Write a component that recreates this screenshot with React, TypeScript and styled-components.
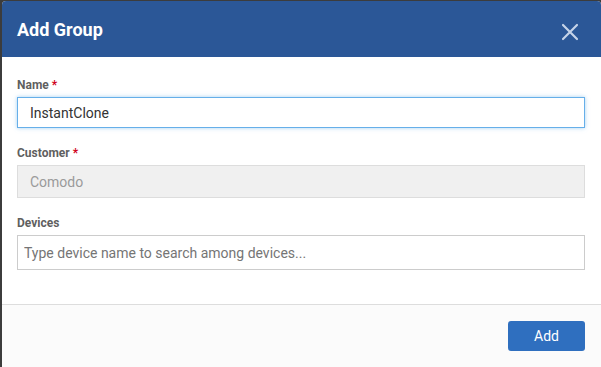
import React, {useState} from 'react';
import styled, {createGlobalStyle} from 'styled-components';

const GlobalStyle = createGlobalStyle`
  html, body {
    margin: 0;
    padding: 0;
    background: #3c3c3c;
    font-family: Roboto, "Liberation Sans", Arial, sans-serif;
  }
`;

// whole dialog
const Modal = styled.div`
  margin: 1px 0 0 2px;
  height: 366px;
  background: #ffffff;
  border-radius: 4px 4px 0 0;
  overflow: hidden;
  display: flex;
  flex-direction: column;
`;

const Header = styled.div`
  height: 56px;
  background: #2b5797;
  display: flex;
  align-items: center;
  justify-content: space-between;
  padding: 0 22px 0 15px;
  flex-shrink: 0;
`;

const Title = styled.h4`
  margin: 0;
  color: #ffffff;
  font-size: 18px;
  font-weight: 700;
`;

const CloseButton = styled.button`
  background: none;
  border: none;
  padding: 0;
  margin-top: 5px;
  display: flex;
  cursor: pointer;
`;

const Body = styled.div`
  flex: 1;
  padding: 21px 16px 0 15px;
  display: flex;
  flex-direction: column;
`;

const Field = styled.div`
  display: flex;
  flex-direction: column;
  margin-bottom: 18px;
`;

const Label = styled.label`
  font-size: 12px;
  font-weight: 700;
  color: #5f5f5f;
  margin-bottom: 5px;
  line-height: 14px;
`;

const Req = styled.span`
  color: #d0021b;
  margin-left: 3px;
`;

const Input = styled.input<{$focus?: boolean; $pad?: number; $h?: number}>`
  box-sizing: border-box;
  width: 100%;
  height: ${p => p.$h ?? 31}px;
  padding: 0 ${p => p.$pad ?? 12}px;
  font-family: inherit;
  font-size: 14px;
  color: #333333;
  background: #ffffff;
  border: 1px solid ${p => (p.$focus ? '#66afe9' : '#cccccc')};
  border-radius: 0;
  outline: none;
  box-shadow: ${p => (p.$focus ? '0 0 4px rgba(102, 175, 233, 0.6)' : 'none')};

  &:disabled {
    background: #f0f0f0;
    color: #9a9a9a;
    border-color: #dddddd;
  }

  &::placeholder {
    color: #757575;
  }
`;

const Footer = styled.div`
  height: 63px;
  border-top: 1px solid #dddddd;
  background: #fbfbfb;
  display: flex;
  align-items: flex-start;
  justify-content: flex-end;
  padding: 16px 16px 0 0;
  box-sizing: border-box;
  flex-shrink: 0;
`;

const AddButton = styled.button`
  width: 77px;
  height: 30px;
  background: #2f6fbf;
  color: #ffffff;
  border: none;
  border-radius: 3px;
  font-family: inherit;
  font-size: 14px;
  cursor: pointer;
`;

function App() {
    const [name, setName] = useState('InstantClone');
    const [devices, setDevices] = useState('');

    return (
        <>
            <GlobalStyle/>
            <Modal>
                <Header>
                    <Title>Add Group</Title>
                    <CloseButton aria-label="Close">
                        <svg width="18" height="18" viewBox="0 0 18 18">
                            <path d="M2 2 L16 16 M16 2 L2 16" stroke="#c5d3e8" strokeWidth="2.2" strokeLinecap="round"/>
                        </svg>
                    </CloseButton>
                </Header>
                <Body>
                    <Field>
                        <Label>Name<Req>*</Req></Label>
                        <Input $focus value={name} onChange={(e) => setName(e.target.value)}/>
                    </Field>
                    <Field>
                        <Label>Customer<Req>*</Req></Label>
                        <Input $h={33} value="Comodo" disabled readOnly/>
                    </Field>
                    <Field>
                        <Label>Devices</Label>
                        <Input
                            $pad={6}
                            $h={35}
                            value={devices}
                            placeholder="Type device name to search among devices..."
                            onChange={(e) => setDevices(e.target.value)}
                        />
                    </Field>
                </Body>
                <Footer>
                    <AddButton>Add</AddButton>
                </Footer>
            </Modal>
        </>
    );
}

export default App;
